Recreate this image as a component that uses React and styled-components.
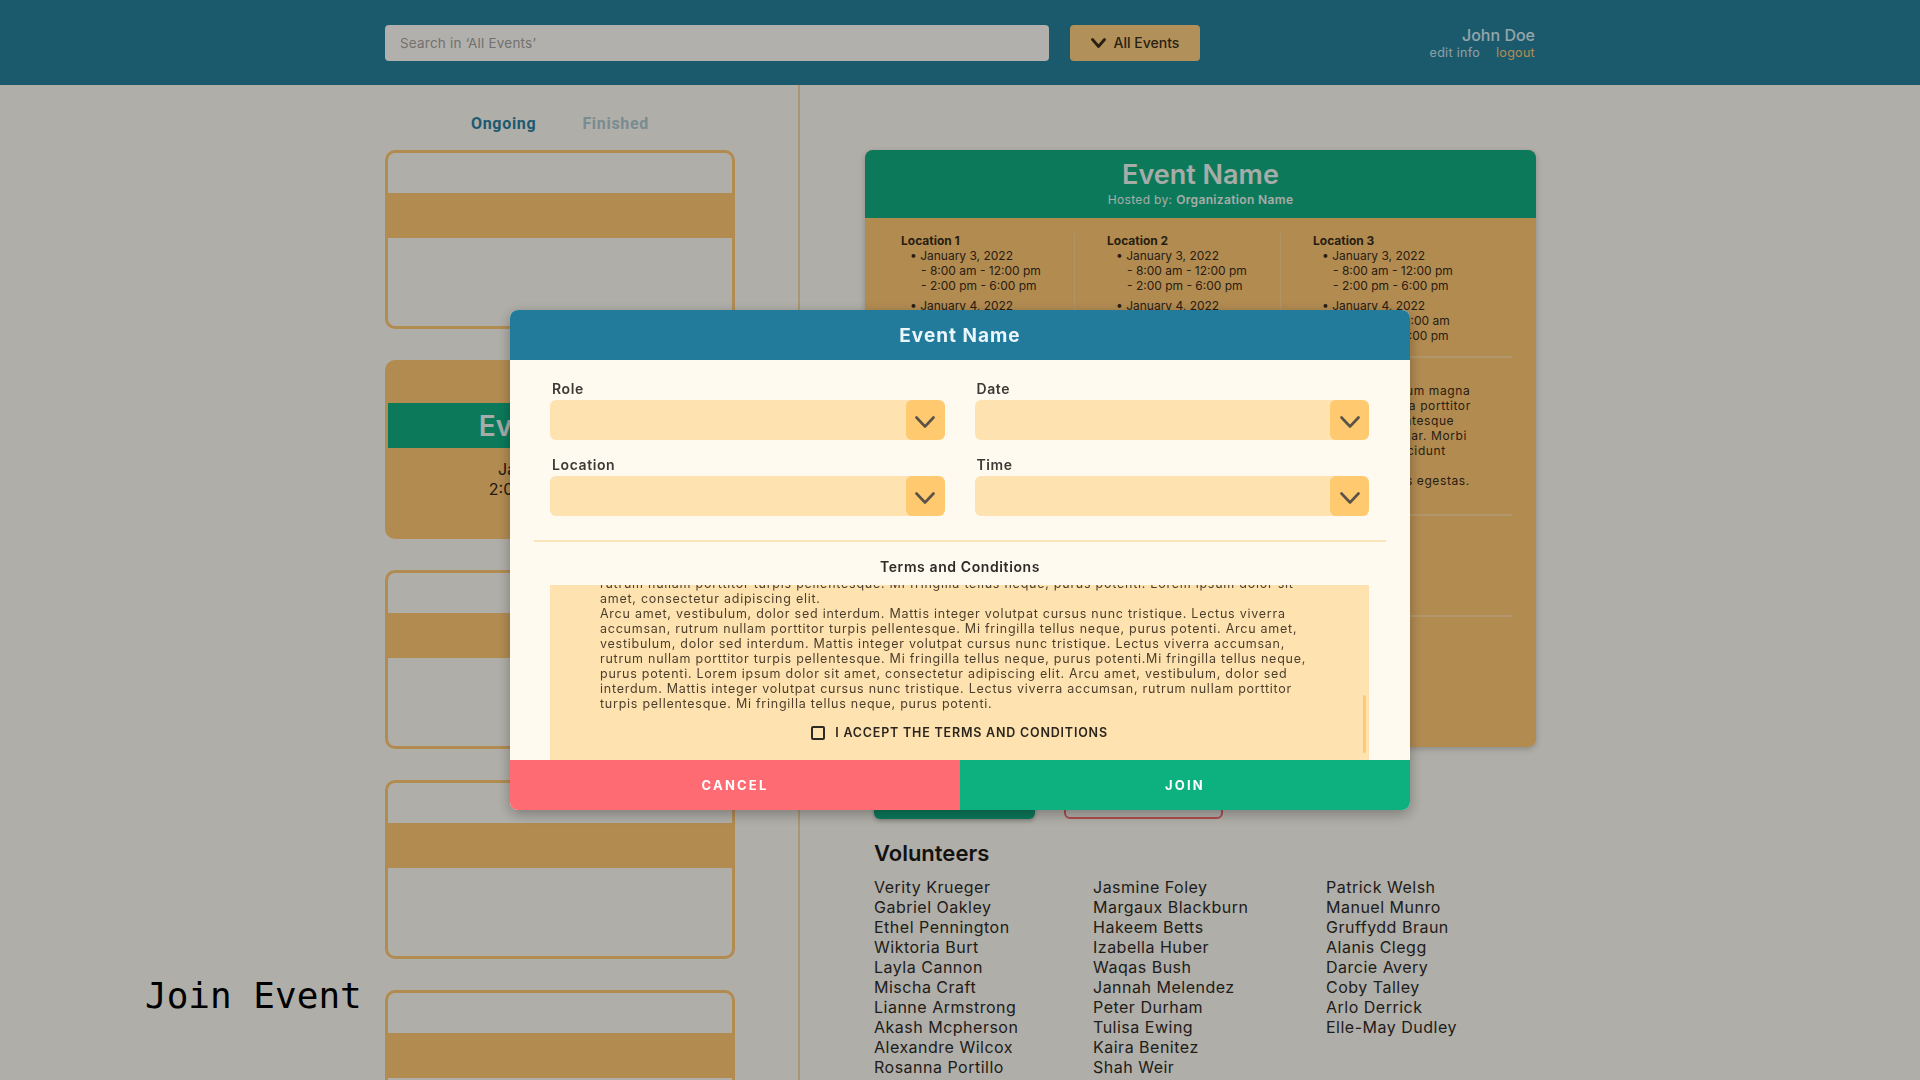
import React, { useLayoutEffect, useRef } from "react";
import styled, { createGlobalStyle } from "styled-components";

const GlobalStyle = createGlobalStyle`
  * { box-sizing: border-box; }
  html, body { margin: 0; height: 100%; }
  body {
    background: #fcf9f1;
    font-family: Inter, "Open Sans", sans-serif;
    color: #2f2a22;
    overflow: hidden;
  }
`;

const Page = styled.div`
  height: 100vh;
  overflow: hidden;
`;

const TopBar = styled.header`
  height: 85px;
  background: #27819d;
`;

const TopInner = styled.div`
  width: 1150px;
  height: 100%;
  margin: 0 auto;
  display: flex;
  align-items: center;
`;

const SearchBox = styled.input`
  width: 664px;
  height: 36px;
  border: none;
  border-radius: 4px;
  background: #fffcf6;
  padding: 0 15px;
  font-family: Inter, sans-serif;
  font-size: 13.5px;
  letter-spacing: 0.2px;
  color: #333;
  &::placeholder {
    color: #a5a29c;
  }
`;

const FilterButton = styled.button`
  margin-left: 21px;
  width: 130px;
  height: 36px;
  border: none;
  border-radius: 4px;
  background: #ffcf80;
  display: flex;
  align-items: center;
  justify-content: center;
  gap: 8px;
  font-family: Inter, sans-serif;
  font-size: 14px;
  font-weight: 500;
  color: #3b2f1c;
`;

const UserBlock = styled.div`
  margin-left: auto;
  text-align: right;
`;

const UserName = styled.div`
  font-size: 16px;
  line-height: 20px;
  font-weight: 500;
  color: #d6ecf4;
`;

const UserLinks = styled.div`
  display: flex;
  justify-content: flex-end;
  gap: 16px;
  font-size: 12.5px;
  line-height: 16px;
  letter-spacing: 0.3px;
`;

const UserLink = styled.span`
  color: ${(p) => (p.$accent ? "#ffc875" : "#cfe3ea")};
`;

const Main = styled.div`
  width: 1150px;
  margin: 0 auto;
  height: calc(100vh - 85px);
  display: flex;
`;

const Sidebar = styled.aside`
  width: 415px;
  flex-shrink: 0;
  padding: 28px 65px 0 0;
  border-right: 2px solid #f4d7a3;
`;

const Tabs = styled.div`
  width: 350px;
  display: flex;
  justify-content: center;
  gap: 46px;
  margin-bottom: 15px;
`;

const Tab = styled.span`
  font-family: Roboto, sans-serif;
  font-size: 16px;
  line-height: 22px;
  font-weight: 700;
  letter-spacing: 0.7px;
  color: ${(p) => (p.$active ? "#2c81a0" : "#aec9d2")};
`;

const StubCard = styled.div`
  width: 350px;
  height: 179px;
  margin-bottom: 31px;
  border: 3px solid #ffc875;
  border-radius: 10px;
  overflow: hidden;
  background: ${(p) => (p.$active ? "#ffc875" : "transparent")};
  display: flex;
  flex-direction: column;
`;

const StubTop = styled.div`
  height: 40px;
  flex-shrink: 0;
`;

const StubBand = styled.div`
  height: 45px;
  flex-shrink: 0;
  background: ${(p) => (p.$active ? "#10ae81" : "#ffc875")};
  display: flex;
  align-items: center;
  justify-content: center;
  font-size: 28px;
  font-weight: 600;
  color: #eef7f2;
`;

const StubText = styled.div`
  padding-top: 11px;
  text-align: center;
  font-size: 16px;
  line-height: 20px;
  color: #2f2416;
`;

const Content = styled.section`
  flex: 1;
  padding: 65px 0 0 65px;
`;

const EventCard = styled.div`
  width: 671px;
  height: 597px;
  border-radius: 8px;
  overflow: hidden;
  background: #ffc875;
  box-shadow: 0 2px 6px rgba(0, 0, 0, 0.2);
`;

const EventHeader = styled.div`
  height: 68px;
  background: #10ae81;
  padding-top: 8px;
  text-align: center;
  color: #eef6f0;
`;

const EventTitle = styled.div`
  font-size: 27px;
  line-height: 34px;
  font-weight: 600;
`;

const HostedBy = styled.div`
  font-size: 12px;
  line-height: 16px;
  letter-spacing: 0.35px;
  b {
    font-weight: 600;
  }
`;

const EventBody = styled.div`
  padding: 15px 24px 0;
  font-size: 12px;
  line-height: 15px;
  color: #3a2c18;
`;

const Locations = styled.div`
  display: flex;
  padding-left: 12px;
`;

const LocationCol = styled.div`
  width: ${(p) => (p.$first ? "173px" : "206px")};
  padding-left: ${(p) => (p.$first ? "0" : "32px")};
  border-left: ${(p) => (p.$first ? "none" : "1px solid rgba(255,255,255,0.22)")};
`;

const LocationTitle = styled.div`
  font-weight: 700;
`;

const DateGroup = styled.div`
  margin-bottom: 5px;
`;

const DateLine = styled.div`
  padding-left: 9px;
`;

const TimeLine = styled.div`
  padding-left: 20px;
`;

const Rule = styled.hr`
  border: none;
  height: 2px;
  flex-shrink: 0;
  background: rgba(255, 232, 190, 0.55);
  margin: ${(p) => p.$margin || "8px 0 25px"};
`;

const Description = styled.div`
  padding-left: 12px;
  white-space: nowrap;
  letter-spacing: 0.6px;
`;

const Paragraph = styled.div`
  margin-bottom: ${(p) => (p.$last ? "0" : "15px")};
`;

const HiddenInfo = styled.div`
  padding: 12px 0 0 12px;
  height: 99px;
`;

const ActionRow = styled.div`
  display: flex;
  gap: 29px;
  padding: 32px 0 0 9px;
`;

const ActionButton = styled.button`
  width: ${(p) => (p.$outline ? "159px" : "161px")};
  height: 40px;
  border-radius: 6px;
  border: ${(p) => (p.$outline ? "2px solid #ff6b72" : "none")};
  background: ${(p) => (p.$outline ? "transparent" : "#10ae81")};
  color: ${(p) => (p.$outline ? "#ff6b72" : "#fff")};
  box-shadow: ${(p) => (p.$outline ? "none" : "0 2px 4px rgba(0,0,0,0.25)")};
  font-family: Inter, sans-serif;
  font-weight: 700;
  letter-spacing: 1.5px;
`;

const Volunteers = styled.div`
  padding: 20px 0 0 9px;
`;

const VolunteersTitle = styled.h2`
  margin: 0 0 10px;
  font-size: 22px;
  line-height: 28px;
  font-weight: 600;
  color: #1e1b16;
`;

const NameGrid = styled.div`
  display: grid;
  grid-template-columns: 219px 233px auto;
`;

const NameCol = styled.div`
  font-size: 16px;
  line-height: 20px;
  letter-spacing: 0.5px;
  color: #2f2c28;
`;

const Annotation = styled.div`
  position: absolute;
  left: 145px;
  top: 978px;
  font-family: "DejaVu Sans Mono", monospace;
  font-size: 36px;
  line-height: 36px;
  color: #000;
`;

const Overlay = styled.div`
  position: fixed;
  inset: 0;
  background: rgba(0, 0, 0, 0.3);
  display: flex;
  justify-content: center;
  align-items: flex-start;
  padding-top: 310px;
`;

const Modal = styled.div`
  width: 900px;
  height: 500px;
  border-radius: 8px;
  overflow: hidden;
  background: #fffaf0;
  box-shadow: 0 4px 14px rgba(0, 0, 0, 0.3);
  display: flex;
  flex-direction: column;
`;

const ModalHeader = styled.div`
  height: 50px;
  flex-shrink: 0;
  background: #237b9c;
  display: flex;
  align-items: center;
  justify-content: center;
  font-size: 19px;
  font-weight: 700;
  letter-spacing: 1px;
  color: #eaf6fb;
`;

const ModalBody = styled.div`
  flex: 1;
  padding-top: 20px;
  display: flex;
  flex-direction: column;
  min-height: 0;
`;

const FieldGrid = styled.div`
  display: grid;
  grid-template-columns: 1fr 1fr;
  column-gap: 30px;
  row-gap: 16px;
  padding: 0 41px 0 40px;
`;

const Field = styled.label`
  display: flex;
  flex-direction: column;
  gap: 2px;
`;

const FieldLabel = styled.span`
  padding-left: 2px;
  font-size: 14px;
  line-height: 18px;
  font-weight: 600;
  letter-spacing: 0.6px;
  color: #3d3a35;
`;

const SelectBox = styled.div`
  height: 40px;
  border-radius: 6px;
  background: #fee2b0;
  display: flex;
  justify-content: flex-end;
  overflow: hidden;
`;

const SelectArrow = styled.div`
  width: 39px;
  background: #fec96f;
  border-radius: 6px;
  display: flex;
  align-items: center;
  justify-content: center;
  padding-top: 3px;
`;

const ModalRule = styled.hr`
  border: none;
  height: 2px;
  flex-shrink: 0;
  background: #fbe5b8;
  margin: 24px 24px 16px;
`;

const TermsTitle = styled.div`
  text-align: center;
  font-size: 14px;
  line-height: 18px;
  font-weight: 600;
  letter-spacing: 0.6px;
  color: #2e2a25;
  margin-bottom: 9px;
`;

const TermsFrame = styled.div`
  position: relative;
  margin: 0 41px 0 40px;
  height: 175px;
  flex-shrink: 0;
  background: #fee3b1;
`;

const TermsScroll = styled.div`
  height: 100%;
  overflow-y: auto;
  overflow-x: hidden;
  padding: 14px 50px 18px;
  font-size: 12.5px;
  line-height: 15px;
  letter-spacing: 0.75px;
  color: #4b3e2c;
  white-space: nowrap;
`;

const ScrollThumb = styled.div`
  position: absolute;
  right: 3px;
  top: 110px;
  width: 3px;
  height: 58px;
  border-radius: 2px;
  background: #fec96f;
`;

const AcceptRow = styled.label`
  margin-top: 13px;
  display: flex;
  align-items: center;
  justify-content: center;
  gap: 10px;
  font-size: 12.5px;
  line-height: 18px;
  font-weight: 600;
  letter-spacing: 0.8px;
  color: #2a251e;
`;

const CheckSquare = styled.span`
  width: 14px;
  height: 14px;
  border: 2px solid #2d2a25;
  border-radius: 2px;
`;

const ModalActions = styled.div`
  display: flex;
  height: 50px;
  flex-shrink: 0;
`;

const ModalButton = styled.button`
  flex: 1;
  border: none;
  background: ${(p) => (p.$variant === "cancel" ? "#ff6b72" : "#0db07f")};
  color: #fff;
  font-family: Inter, sans-serif;
  font-size: 13px;
  font-weight: 700;
  letter-spacing: 2.2px;
`;

const Chevron = ({ w = 20, h = 12, color = "#5b5347", width = 2.6 }) => (
  <svg width={w} height={h} viewBox={`0 0 ${w} ${h}`} fill="none">
    <path
      d={`M1.5 1.5 L${w / 2} ${h - 1.5} L${w - 1.5} 1.5`}
      stroke={color}
      strokeWidth={width}
      strokeLinecap="round"
      strokeLinejoin="round"
    />
  </svg>
);

const schedule = [
  { date: "January 3, 2022", times: ["8:00 am - 12:00 pm", "2:00 pm - 6:00 pm"] },
  { date: "January 4, 2022", times: ["8:00 am - 11:00 am", "2:00 pm - 6:00 pm"] },
];

const descriptionA = [
  "Lorem ipsum dolor sit amet, consectetur adipiscing elit. Viverra sed tristique dictum magna",
  "pellentesque elit ullamcorper dignissim cras tincidunt lobortis feugiat vivamus ut a porttitor",
  "leo. Amet nisl suscipit adipiscing bibendum est ultricies integer quis auctor pellentesque",
  "habitant morbi tristique senectus et netus. Pretium lectus quam leo in vitae pulvinar. Morbi",
  "tristique senectus et netus et malesuada fames ac turpis egestas integer eget tincidunt",
];
const descriptionB = "Vitae congue mauris rhoncus aenean scelerisque mauris. Malesuada fames ac dis egestas.";

const volunteers = [
  ["Verity Krueger", "Gabriel Oakley", "Ethel Pennington", "Wiktoria Burt", "Layla Cannon", "Mischa Craft", "Lianne Armstrong", "Akash Mcpherson", "Alexandre Wilcox", "Rosanna Portillo"],
  ["Jasmine Foley", "Margaux Blackburn", "Hakeem Betts", "Izabella Huber", "Waqas Bush", "Jannah Melendez", "Peter Durham", "Tulisa Ewing", "Kaira Benitez", "Shah Weir"],
  ["Patrick Welsh", "Manuel Munro", "Gruffydd Braun", "Alanis Clegg", "Darcie Avery", "Coby Talley", "Arlo Derrick", "Elle-May Dudley"],
];

const introLines = [
  "Lorem ipsum dolor sit amet, consectetur adipiscing elit. Arcu amet, vestibulum, dolor sed interdum. Mattis",
  "integer volutpat cursus nunc tristique. Lectus viverra accumsan, rutrum nullam porttitor turpis pellentesque.",
  "Mi fringilla tellus neque, purus potenti. Arcu amet, vestibulum, dolor sed interdum. Mattis integer volutpat",
  "cursus nunc tristique. Lectus viverra accumsan, rutrum nullam porttitor turpis pellentesque. Mi fringilla",
  "tellus neque, purus potenti. Lorem ipsum dolor sit amet, consectetur adipiscing elit. Arcu amet, vestibulum,",
  "dolor sed interdum. Mattis integer volutpat cursus nunc tristique. Lectus viverra accumsan, rutrum nullam",
  "porttitor turpis pellentesque. Mi fringilla tellus neque, purus potenti. Arcu amet, vestibulum, dolor sed",
];

const termsLines = [
  ...introLines,
  ...introLines,
  ...introLines.slice(0, 6),
  "rutrum nullam porttitor turpis pellentesque. Mi fringilla tellus neque, purus potenti. Lorem ipsum dolor sit",
  "amet, consectetur adipiscing elit.",
  "Arcu amet, vestibulum, dolor sed interdum. Mattis integer volutpat cursus nunc tristique. Lectus viverra",
  "accumsan, rutrum nullam porttitor turpis pellentesque. Mi fringilla tellus neque, purus potenti. Arcu amet,",
  "vestibulum, dolor sed interdum. Mattis integer volutpat cursus nunc tristique. Lectus viverra accumsan,",
  "rutrum nullam porttitor turpis pellentesque. Mi fringilla tellus neque, purus potenti.Mi fringilla tellus neque,",
  "purus potenti. Lorem ipsum dolor sit amet, consectetur adipiscing elit. Arcu amet, vestibulum, dolor sed",
  "interdum. Mattis integer volutpat cursus nunc tristique. Lectus viverra accumsan, rutrum nullam porttitor",
  "turpis pellentesque. Mi fringilla tellus neque, purus potenti.",
];

const SelectField = ({ label }) => (
  <Field>
    <FieldLabel>{label}</FieldLabel>
    <SelectBox>
      <SelectArrow>
        <Chevron />
      </SelectArrow>
    </SelectBox>
  </Field>
);

const JoinModal = () => {
  const termsRef = useRef(null);
  useLayoutEffect(() => {
    const el = termsRef.current;
    if (el) el.scrollTop = el.scrollHeight;
  }, []);

  return (
    <Overlay>
      <Modal>
        <ModalHeader>Event Name</ModalHeader>
        <ModalBody>
          <FieldGrid>
            <SelectField label="Role" />
            <SelectField label="Date" />
            <SelectField label="Location" />
            <SelectField label="Time" />
          </FieldGrid>
          <ModalRule />
          <TermsTitle>Terms and Conditions</TermsTitle>
          <TermsFrame>
            <TermsScroll ref={termsRef}>
              {termsLines.map((line, i) => (
                <div key={i}>{line}</div>
              ))}
              <AcceptRow>
                <CheckSquare />
                I ACCEPT THE TERMS AND CONDITIONS
              </AcceptRow>
            </TermsScroll>
            <ScrollThumb />
          </TermsFrame>
        </ModalBody>
        <ModalActions>
          <ModalButton $variant="cancel">CANCEL</ModalButton>
          <ModalButton $variant="join">JOIN</ModalButton>
        </ModalActions>
      </Modal>
    </Overlay>
  );
};

const App = () => {
  return (
    <>
      <GlobalStyle />
      <Page>
        <TopBar>
          <TopInner>
            <SearchBox placeholder="Search in ‘All Events’" />
            <FilterButton>
              <Chevron w={15} h={10} color="#3b2f1c" width={2.8} />
              All Events
            </FilterButton>
            <UserBlock>
              <UserName>John Doe</UserName>
              <UserLinks>
                <UserLink>edit info</UserLink>
                <UserLink $accent>logout</UserLink>
              </UserLinks>
            </UserBlock>
          </TopInner>
        </TopBar>

        <Main>
          <Sidebar>
            <Tabs>
              <Tab $active>Ongoing</Tab>
              <Tab>Finished</Tab>
            </Tabs>
            <StubCard>
              <StubTop />
              <StubBand />
            </StubCard>
            <StubCard $active>
              <StubTop />
              <StubBand $active>Event Name</StubBand>
              <StubText>
                January 3, 2022
                <br />
                2:00 pm - 6:00 pm
              </StubText>
            </StubCard>
            {[0, 1, 2].map((i) => (
              <StubCard key={i}>
                <StubTop />
                <StubBand />
              </StubCard>
            ))}
          </Sidebar>

          <Content>
            <EventCard>
              <EventHeader>
                <EventTitle>Event Name</EventTitle>
                <HostedBy>
                  Hosted by: <b>Organization Name</b>
                </HostedBy>
              </EventHeader>
              <EventBody>
                <Locations>
                  {["Location 1", "Location 2", "Location 3"].map((loc, i) => (
                    <LocationCol key={loc} $first={i === 0}>
                      <LocationTitle>{loc}</LocationTitle>
                      {schedule.map((d) => (
                        <DateGroup key={d.date}>
                          <DateLine>• {d.date}</DateLine>
                          {d.times.map((t) => (
                            <TimeLine key={t}>- {t}</TimeLine>
                          ))}
                        </DateGroup>
                      ))}
                    </LocationCol>
                  ))}
                </Locations>
                <Rule />
                <Description>
                  <Paragraph>
                    {descriptionA.map((line) => (
                      <div key={line}>{line}</div>
                    ))}
                  </Paragraph>
                  <Paragraph $last>{descriptionB}</Paragraph>
                </Description>
                <Rule $margin="26px 0 0" />
                <HiddenInfo>
                  <LocationTitle>Contact</LocationTitle>
                  <div>organization@email.com</div>
                </HiddenInfo>
                <Rule $margin="0" />
              </EventBody>
            </EventCard>

            <ActionRow>
              <ActionButton>VOLUNTEER</ActionButton>
              <ActionButton $outline>SHARE</ActionButton>
            </ActionRow>

            <Volunteers>
              <VolunteersTitle>Volunteers</VolunteersTitle>
              <NameGrid>
                {volunteers.map((col, i) => (
                  <NameCol key={i}>
                    {col.map((n) => (
                      <div key={n}>{n}</div>
                    ))}
                  </NameCol>
                ))}
              </NameGrid>
            </Volunteers>
          </Content>
        </Main>
        <Annotation>Join Event</Annotation>
      </Page>
      <JoinModal />
    </>
  );
};

export default App;
